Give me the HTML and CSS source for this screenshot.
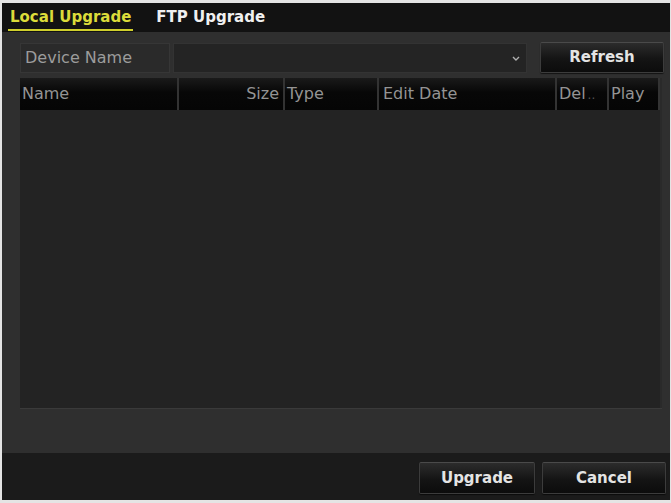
FILE: index.html
```html
<!DOCTYPE html>
<html>
<head>
<meta charset="utf-8">
<link rel="stylesheet" href="styles.css">
</head>
<body>
<div class="window">
  <div class="tabbar">
    <span class="tab active">Local Upgrade</span>
    <span class="tab">FTP Upgrade</span>
  </div>
  <div class="content">
    <div class="device-row">
      <div class="label">Device Name</div>
      <div class="select">
        <svg class="chev" width="8" height="5" viewBox="0 0 8 5"><polyline points="1,1 4,4 7,1" fill="none" stroke="#b0b0b0" stroke-width="1.4"/></svg>
      </div>
      <div class="btn refresh">Refresh</div>
    </div>
    <div class="table">
      <div class="thead">
        <div class="th name">Name</div>
        <div class="th size">Size</div>
        <div class="th type">Type</div>
        <div class="th date">Edit Date</div>
        <div class="th del">Del<span class="dots">..</span></div>
        <div class="th play">Play</div>
      </div>
      <div class="tbody"></div>
    </div>
  </div>
  <div class="footer">
    <div class="btn action">Upgrade</div>
    <div class="btn action cancel">Cancel</div>
  </div>
</div>
</body>
</html>
```

FILE: styles.css
```css
html, body {
  margin: 0;
  padding: 0;
  background: #e4e4e4;
}
body {
  font-family: "DejaVu Sans", "Liberation Sans", sans-serif;
  width: 671px;
  height: 503px;
  overflow: hidden;
}
.window {
  margin: 3px 1px 3px 2px;
  height: 497px;
  display: flex;
  flex-direction: column;
  background: #2f2f2f;
}
.tabbar {
  height: 29px;
  background: #121212;
  display: flex;
  align-items: flex-end;
  padding-left: 6px;
  gap: 21px;
}
.tab {
  font-weight: bold;
  font-size: 15px;
  line-height: 24px;
  color: #f0f0f0;
  padding: 0 2px;
  border-bottom: 2px solid transparent;
  margin-bottom: 1px;
}
.tab.active {
  color: #dcdc3a;
  border-bottom-color: #cfcf2c;
}
.content {
  flex: 1;
  padding: 11px 6px 0 18px;
  display: flex;
  flex-direction: column;
}
.device-row {
  display: flex;
  height: 30px;
  gap: 3px;
}
.label {
  background: #2a2a2a;
  border: 1px solid #363636;
  color: #9c9c9c;
  font-size: 16px;
  line-height: 28px;
  padding-left: 4px;
  box-sizing: border-box;
  width: 150px;
}
.select {
  flex: 1;
  background: #242424;
  border: 1px solid #333;
  margin-right: 10px;
  display: flex;
  align-items: center;
  justify-content: flex-end;
  padding-right: 6px;
}
.chev {
  display: block;
}
.btn {
  background: linear-gradient(#2c2c2c, #141414 55%, #0c0c0c);
  border: 1px solid #3c3c3c;
  border-top-color: #4a4a4a;
  border-radius: 2px;
  color: #e4e4e4;
  font-weight: bold;
  font-size: 15px;
  text-align: center;
  box-sizing: border-box;
  box-shadow: 0 1px 1px rgba(0,0,0,0.6);
}
.refresh {
  width: 124px;
  line-height: 29px;
  margin-top: -1px;
  height: 31px;
}
.table {
  margin-top: 5px;
  width: 642px;
  height: 330px;
  display: flex;
  flex-direction: column;
  background: #232323;
  border-right: 2px solid #2a2a2a;
  box-sizing: border-box;
  box-shadow: 0 1px 0 #3a3a3a;
}
.thead {
  display: grid;
  grid-template-columns: 157px 106px 94px 178px 52px 53px;
  height: 32px;
  background: linear-gradient(#1a1a1a, #070707 45%, #050505);
}
.th {
  color: #949494;
  font-size: 16px;
  line-height: 32px;
  padding: 0 3px;
  white-space: nowrap;
  border-left: 2px solid #333;
}
.th.name {
  border-left: none;
  padding-left: 2px;
}
.th.size {
  text-align: right;
  padding-right: 4px;
}
.th.type {
  padding-left: 2px;
}
.th.date {
  padding-left: 4px;
}
.th.del {
  padding: 0 2px;
}
.dots {
  color: #555;
  font-size: 12px;
  margin-left: 2px;
}
.th.play {
  padding-left: 2px;
  border-right: 2px solid #333;
}
.tbody {
  flex: 1;
  background: #232323;
}
.footer {
  height: 47px;
  background: #1b1b1b;
  display: flex;
  justify-content: flex-end;
  align-items: center;
  gap: 7px;
  padding-right: 4px;
  padding-top: 3px;
  box-sizing: border-box;
}
.action {
  width: 116px;
  height: 32px;
  line-height: 30px;
}
.action.cancel {
  width: 124px;
}
```
